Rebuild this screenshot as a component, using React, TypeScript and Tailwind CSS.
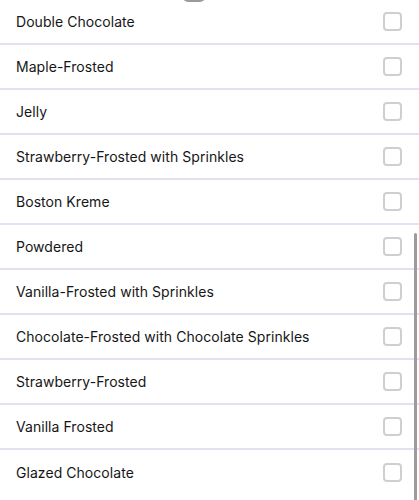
import { useState } from "react";

const donuts = [
  "Double Chocolate",
  "Maple-Frosted",
  "Jelly",
  "Strawberry-Frosted with Sprinkles",
  "Boston Kreme",
  "Powdered",
  "Vanilla-Frosted with Sprinkles",
  "Chocolate-Frosted with Chocolate Sprinkles",
  "Strawberry-Frosted",
  "Vanilla Frosted",
  "Glazed Chocolate",
];

export default function App() {
  const [checked, setChecked] = useState<Record<string, boolean>>({});

  return (
    <div className="relative h-[500px] w-[419px] overflow-hidden bg-white font-['Inter',sans-serif] text-[#161616]">
      {/* pull handle peeking in from above */}
      <div className="absolute left-[183px] top-[-8px] h-[10px] w-[22px] rounded-full border-b-2 border-[#9a9a9a]" />

      <ul>
        {donuts.map((name) => (
          <li
            key={name}
            className="flex h-[45px] items-center justify-between border-b-2 border-[#e3e0f2] pl-4 pr-[17px] last:border-b-0"
          >
            <span className="text-[14px] tracking-[0.05px]">{name}</span>
            <button
              onClick={() => setChecked((c) => ({ ...c, [name]: !c[name] }))}
              className={`h-[19px] w-[19px] rounded-[4px] border-2 ${
                checked[name] ? "border-[#5b4bd0] bg-[#5b4bd0]" : "border-[#cfcfcf] bg-white"
              }`}
            />
          </li>
        ))}
      </ul>

      {/* scrollbar thumb */}
      <div className="absolute right-[2px] top-[233px] h-[280px] w-[3px] rounded-full bg-[#9c9c9c]" />
    </div>
  );
}
